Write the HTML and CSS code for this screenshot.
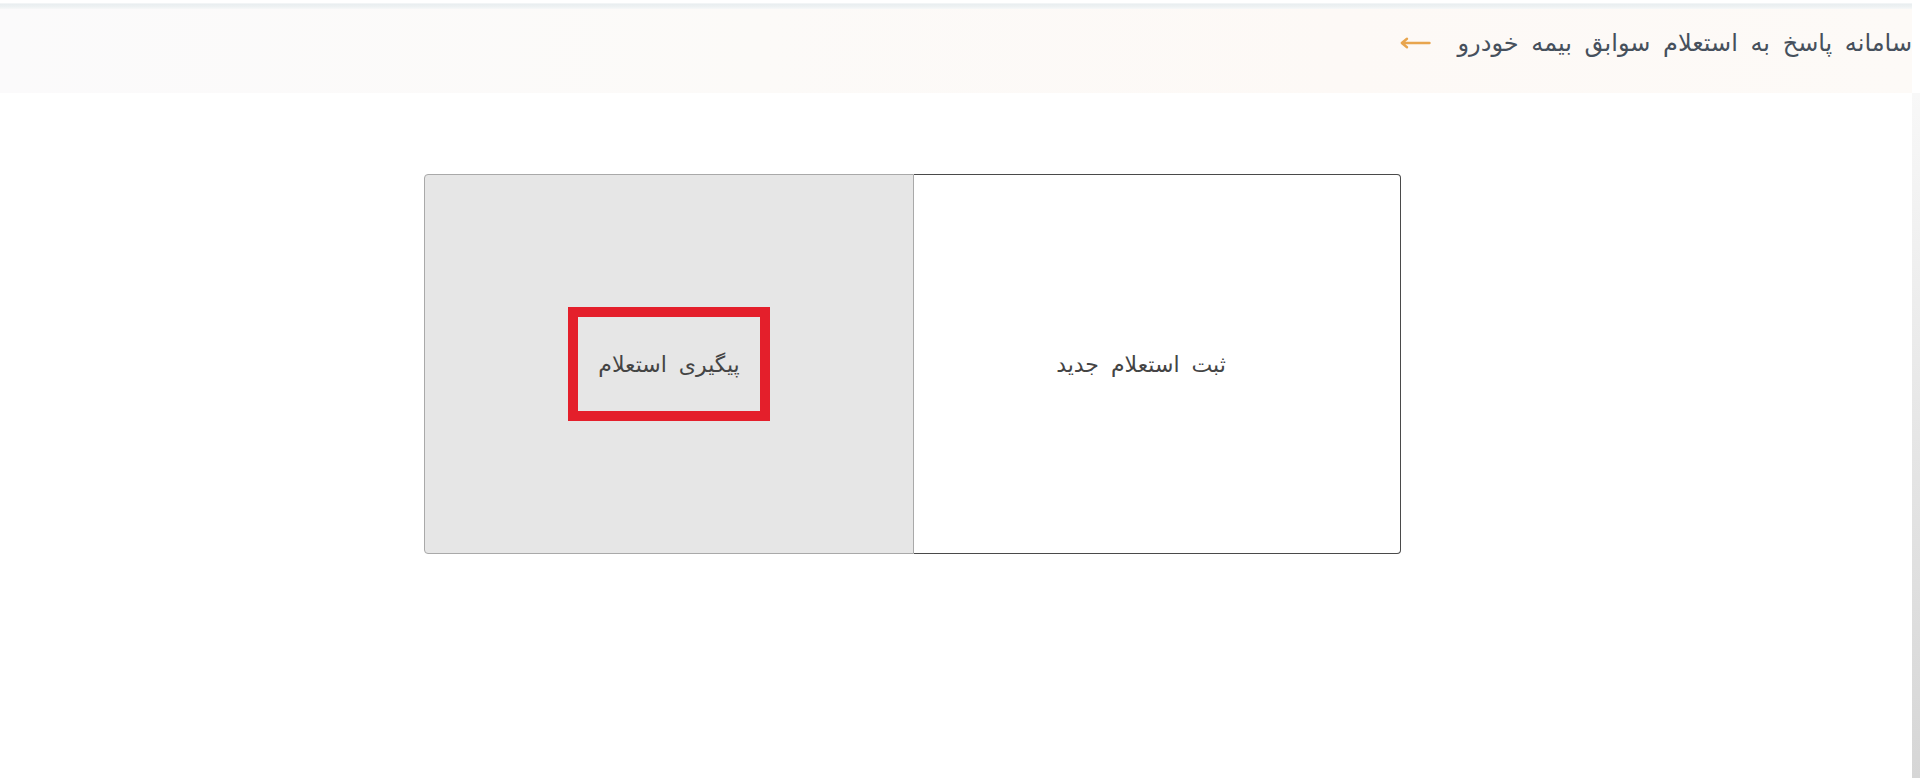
FILE: index.html
```html
<!DOCTYPE html>
<html lang="fa" dir="rtl">
<head>
<meta charset="utf-8">
<title>سامانه پاسخ به استعلام سوابق بیمه خودرو</title>
<link rel="stylesheet" href="styles.css">
</head>
<body>
<div class="page">
  <div class="main">
    <div class="topline"></div>
    <header class="header">
      <span class="title">سامانه پاسخ به استعلام سوابق بیمه خودرو</span>
      <svg class="arrow" width="31" height="12" viewBox="0 0 31 12" aria-hidden="true">
        <path d="M29.5 6 H2 M7 1.8 L1.8 6 L7 10.2" fill="none" stroke="#e8a54e" stroke-width="2.4" stroke-linecap="round" stroke-linejoin="round"/>
      </svg>
    </header>
    <section class="content">
      <div class="choices">
        <a class="choice choice-new">ثبت استعلام جدید</a>
        <a class="choice choice-track"><span class="highlight">پیگیری استعلام</span></a>
      </div>
    </section>
  </div>
  <div class="scrollbar"></div>
</div>
</body>
</html>
```
FILE: styles.css
```css
html, body {
  margin: 0;
  padding: 0;
  background: #ffffff;
}
body {
  font-family: "DejaVu Sans", "Noto Sans", sans-serif;
  width: 1920px;
  height: 778px;
  overflow: hidden;
}
.page {
  display: flex;
  flex-direction: row;
  direction: ltr;
  height: 778px;
}
.main {
  flex: 1;
  direction: rtl;
  display: flex;
  flex-direction: column;
}
.scrollbar {
  width: 8px;
  margin-top: 93px;
  background: linear-gradient(#f8f8f8, #e6e6e6 50%, #d6d6d6);
}
.topline {
  height: 9px;
  background: linear-gradient(#ffffff 0, #ffffff 30%, #e9eef0 45%, #eef2f3 75%, #f7f8f8 100%);
}
.header {
  height: 84px;
  display: flex;
  align-items: center;
  gap: 27px;
  background: linear-gradient(90deg, #fbfafb 0%, #fcfaf8 40%, #fdf9f6 70%, #fdfaf7 100%);
}
.title {
  font-size: 24px;
  word-spacing: 5px;
  color: #46505c;
  line-height: 28px;
  margin-top: -16px;
  white-space: nowrap;
}
.arrow {
  margin-top: -16px;
}
.content {
  flex: 1;
}
.choices {
  display: flex;
  width: 977px;
  height: 380px;
  margin: 81px 0 0 424px;
  margin-right: auto;
}
.choice {
  box-sizing: border-box;
  display: flex;
  align-items: center;
  justify-content: center;
  font-size: 22px;
  word-spacing: 5px;
  color: #444444;
  text-decoration: none;
  white-space: nowrap;
}
.choice-new {
  width: 487px;
  background: #ffffff;
  border: 1px solid #4a4a4a;
  border-left: none;
  border-radius: 0 4px 4px 0;
  padding-right: 32px;
}
.choice-track {
  width: 490px;
  background: #e6e6e6;
  border: 1px solid #a9a9a9;
  border-radius: 4px 0 0 4px;
}
.highlight {
  box-sizing: border-box;
  width: 202px;
  height: 114px;
  border: 10px solid #e41f2b;
  display: flex;
  align-items: center;
  justify-content: center;
}
```
